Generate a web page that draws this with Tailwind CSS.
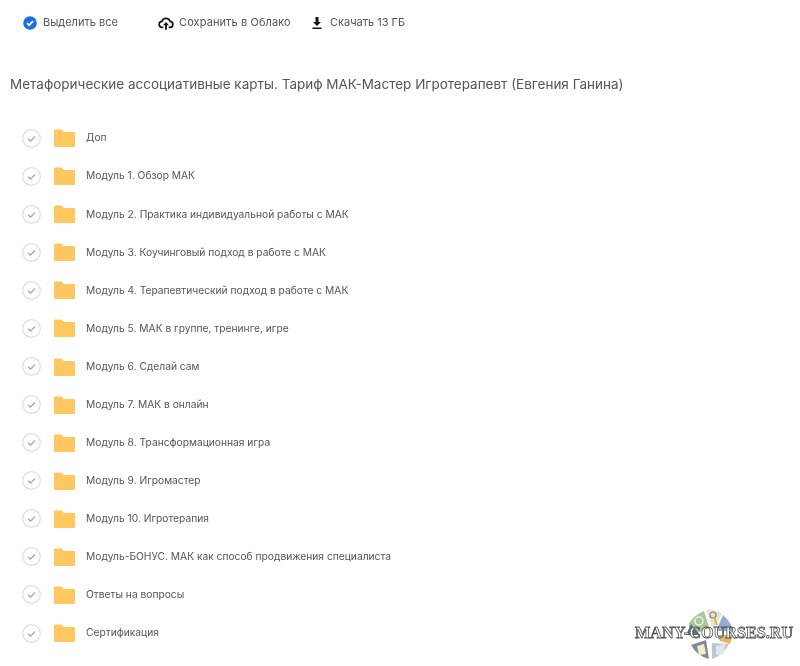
<!DOCTYPE html>
<html lang="en">
<head>
    <meta charset="UTF-8">
    <title>Файлы</title>
    <script src="https://cdn.jsdelivr.net/npm/@tailwindcss/browser@4"></script>
</head>
<body class="bg-white">
<div class="relative w-[800px] h-[666px] overflow-hidden blur-[0.35px] font-['Inter','Liberation_Sans',sans-serif] text-[#555]">

    <!-- Toolbar -->
    <div class="flex items-center h-[23px] mt-[11px] pl-[23px] text-[11px]">
        <svg class="w-[14px] h-[14px]" viewBox="0 0 14 14"><circle cx="7" cy="7" r="6.800" fill="#1a6fe0"/><path d="M4 7.200l2.100 2 3.900-4" fill="none" stroke="#fff" stroke-width="1.800"/></svg>
        <span class="ml-[6px] w-[116px]">Выделить все</span>
        <svg class="w-[16px] h-[16px] -ml-[1px]" viewBox="0 0 24 24"><path d="M8 18.500H6.500a4.500 4.500 0 0 1-.5-9A6.300 6.300 0 0 1 18 9.500a4.500 4.500 0 0 1-.5 9H16" fill="none" stroke="#111" stroke-width="2.600"/><path d="M12 10.500l-4.500 5h3.100V22h2.800v-6.500h3.100z" fill="#111"/></svg>
        <span class="ml-[5px] w-[132px] tracking-[0.1px]">Сохранить в Облако</span>
        <svg class="w-[12px] h-[14px]" viewBox="0 0 12 14"><path d="M4.500 1h3v5h2.500L6 10 2 6h2.500zM1.500 11.500h9V13h-9z" fill="#111"/></svg>
        <span class="ml-[7px]">Скачать 13 ГБ</span>
    </div>

    <h1 class="mt-[39px] ml-[10px] text-[13.5px] leading-[22px] font-normal">Метафорические ассоциативные карты. Тариф МАК-Мастер Игротерапевт (Евгения Ганина)</h1>

    <!-- Folder list -->
    <ul class="mt-[24px] text-[10.24px]">
        <li class="flex items-center h-[38.08px] pl-[22px]"><svg class="w-[19px] h-[19px]" viewBox="0 0 19 19"><circle cx="9.500" cy="9.500" r="8.800" fill="none" stroke="#dedede" stroke-width="1.200"/><path d="M6 9.800l2.500 2.300 4.500-4.600" fill="none" stroke="#a8a8a8" stroke-width="1.300"/></svg><svg class="ml-[13px] w-[21px] h-[18px]" viewBox="0 0 21 18"><path d="M0 1.500A1 1 0 0 1 1 .5h6.500L10 3h10a1 1 0 0 1 1 1v13a1 1 0 0 1-1 1H1a1 1 0 0 1-1-1z" fill="#ffc75f"/></svg><span class="ml-[11px]">Доп</span></li>
        <li class="flex items-center h-[38.08px] pl-[22px]"><svg class="w-[19px] h-[19px]" viewBox="0 0 19 19"><circle cx="9.500" cy="9.500" r="8.800" fill="none" stroke="#dedede" stroke-width="1.200"/><path d="M6 9.800l2.500 2.300 4.500-4.600" fill="none" stroke="#a8a8a8" stroke-width="1.300"/></svg><svg class="ml-[13px] w-[21px] h-[18px]" viewBox="0 0 21 18"><path d="M0 1.500A1 1 0 0 1 1 .5h6.500L10 3h10a1 1 0 0 1 1 1v13a1 1 0 0 1-1 1H1a1 1 0 0 1-1-1z" fill="#ffc75f"/></svg><span class="ml-[11px]">Модуль 1. Обзор МАК</span></li>
        <li class="flex items-center h-[38.08px] pl-[22px]"><svg class="w-[19px] h-[19px]" viewBox="0 0 19 19"><circle cx="9.500" cy="9.500" r="8.800" fill="none" stroke="#dedede" stroke-width="1.200"/><path d="M6 9.800l2.500 2.300 4.500-4.600" fill="none" stroke="#a8a8a8" stroke-width="1.300"/></svg><svg class="ml-[13px] w-[21px] h-[18px]" viewBox="0 0 21 18"><path d="M0 1.500A1 1 0 0 1 1 .5h6.500L10 3h10a1 1 0 0 1 1 1v13a1 1 0 0 1-1 1H1a1 1 0 0 1-1-1z" fill="#ffc75f"/></svg><span class="ml-[11px]">Модуль 2. Практика индивидуальной работы с МАК</span></li>
        <li class="flex items-center h-[38.08px] pl-[22px]"><svg class="w-[19px] h-[19px]" viewBox="0 0 19 19"><circle cx="9.500" cy="9.500" r="8.800" fill="none" stroke="#dedede" stroke-width="1.200"/><path d="M6 9.800l2.500 2.300 4.500-4.600" fill="none" stroke="#a8a8a8" stroke-width="1.300"/></svg><svg class="ml-[13px] w-[21px] h-[18px]" viewBox="0 0 21 18"><path d="M0 1.500A1 1 0 0 1 1 .5h6.500L10 3h10a1 1 0 0 1 1 1v13a1 1 0 0 1-1 1H1a1 1 0 0 1-1-1z" fill="#ffc75f"/></svg><span class="ml-[11px]">Модуль 3. Коучинговый подход в работе с МАК</span></li>
        <li class="flex items-center h-[38.08px] pl-[22px]"><svg class="w-[19px] h-[19px]" viewBox="0 0 19 19"><circle cx="9.500" cy="9.500" r="8.800" fill="none" stroke="#dedede" stroke-width="1.200"/><path d="M6 9.800l2.500 2.300 4.500-4.600" fill="none" stroke="#a8a8a8" stroke-width="1.300"/></svg><svg class="ml-[13px] w-[21px] h-[18px]" viewBox="0 0 21 18"><path d="M0 1.500A1 1 0 0 1 1 .5h6.500L10 3h10a1 1 0 0 1 1 1v13a1 1 0 0 1-1 1H1a1 1 0 0 1-1-1z" fill="#ffc75f"/></svg><span class="ml-[11px]">Модуль 4. Терапевтический подход в работе с МАК</span></li>
        <li class="flex items-center h-[38.08px] pl-[22px]"><svg class="w-[19px] h-[19px]" viewBox="0 0 19 19"><circle cx="9.500" cy="9.500" r="8.800" fill="none" stroke="#dedede" stroke-width="1.200"/><path d="M6 9.800l2.500 2.300 4.500-4.600" fill="none" stroke="#a8a8a8" stroke-width="1.300"/></svg><svg class="ml-[13px] w-[21px] h-[18px]" viewBox="0 0 21 18"><path d="M0 1.500A1 1 0 0 1 1 .5h6.500L10 3h10a1 1 0 0 1 1 1v13a1 1 0 0 1-1 1H1a1 1 0 0 1-1-1z" fill="#ffc75f"/></svg><span class="ml-[11px]">Модуль 5. МАК в группе, тренинге, игре</span></li>
        <li class="flex items-center h-[38.08px] pl-[22px]"><svg class="w-[19px] h-[19px]" viewBox="0 0 19 19"><circle cx="9.500" cy="9.500" r="8.800" fill="none" stroke="#dedede" stroke-width="1.200"/><path d="M6 9.800l2.500 2.300 4.500-4.600" fill="none" stroke="#a8a8a8" stroke-width="1.300"/></svg><svg class="ml-[13px] w-[21px] h-[18px]" viewBox="0 0 21 18"><path d="M0 1.500A1 1 0 0 1 1 .5h6.500L10 3h10a1 1 0 0 1 1 1v13a1 1 0 0 1-1 1H1a1 1 0 0 1-1-1z" fill="#ffc75f"/></svg><span class="ml-[11px]">Модуль 6. Сделай сам</span></li>
        <li class="flex items-center h-[38.08px] pl-[22px]"><svg class="w-[19px] h-[19px]" viewBox="0 0 19 19"><circle cx="9.500" cy="9.500" r="8.800" fill="none" stroke="#dedede" stroke-width="1.200"/><path d="M6 9.800l2.500 2.300 4.500-4.600" fill="none" stroke="#a8a8a8" stroke-width="1.300"/></svg><svg class="ml-[13px] w-[21px] h-[18px]" viewBox="0 0 21 18"><path d="M0 1.500A1 1 0 0 1 1 .5h6.500L10 3h10a1 1 0 0 1 1 1v13a1 1 0 0 1-1 1H1a1 1 0 0 1-1-1z" fill="#ffc75f"/></svg><span class="ml-[11px]">Модуль 7. МАК в онлайн</span></li>
        <li class="flex items-center h-[38.08px] pl-[22px]"><svg class="w-[19px] h-[19px]" viewBox="0 0 19 19"><circle cx="9.500" cy="9.500" r="8.800" fill="none" stroke="#dedede" stroke-width="1.200"/><path d="M6 9.800l2.500 2.300 4.500-4.600" fill="none" stroke="#a8a8a8" stroke-width="1.300"/></svg><svg class="ml-[13px] w-[21px] h-[18px]" viewBox="0 0 21 18"><path d="M0 1.500A1 1 0 0 1 1 .5h6.500L10 3h10a1 1 0 0 1 1 1v13a1 1 0 0 1-1 1H1a1 1 0 0 1-1-1z" fill="#ffc75f"/></svg><span class="ml-[11px]">Модуль 8. Трансформационная игра</span></li>
        <li class="flex items-center h-[38.08px] pl-[22px]"><svg class="w-[19px] h-[19px]" viewBox="0 0 19 19"><circle cx="9.500" cy="9.500" r="8.800" fill="none" stroke="#dedede" stroke-width="1.200"/><path d="M6 9.800l2.500 2.300 4.500-4.600" fill="none" stroke="#a8a8a8" stroke-width="1.300"/></svg><svg class="ml-[13px] w-[21px] h-[18px]" viewBox="0 0 21 18"><path d="M0 1.500A1 1 0 0 1 1 .5h6.500L10 3h10a1 1 0 0 1 1 1v13a1 1 0 0 1-1 1H1a1 1 0 0 1-1-1z" fill="#ffc75f"/></svg><span class="ml-[11px]">Модуль 9. Игромастер</span></li>
        <li class="flex items-center h-[38.08px] pl-[22px]"><svg class="w-[19px] h-[19px]" viewBox="0 0 19 19"><circle cx="9.500" cy="9.500" r="8.800" fill="none" stroke="#dedede" stroke-width="1.200"/><path d="M6 9.800l2.500 2.300 4.500-4.600" fill="none" stroke="#a8a8a8" stroke-width="1.300"/></svg><svg class="ml-[13px] w-[21px] h-[18px]" viewBox="0 0 21 18"><path d="M0 1.500A1 1 0 0 1 1 .5h6.500L10 3h10a1 1 0 0 1 1 1v13a1 1 0 0 1-1 1H1a1 1 0 0 1-1-1z" fill="#ffc75f"/></svg><span class="ml-[11px]">Модуль 10. Игротерапия</span></li>
        <li class="flex items-center h-[38.08px] pl-[22px]"><svg class="w-[19px] h-[19px]" viewBox="0 0 19 19"><circle cx="9.500" cy="9.500" r="8.800" fill="none" stroke="#dedede" stroke-width="1.200"/><path d="M6 9.800l2.500 2.300 4.500-4.600" fill="none" stroke="#a8a8a8" stroke-width="1.300"/></svg><svg class="ml-[13px] w-[21px] h-[18px]" viewBox="0 0 21 18"><path d="M0 1.500A1 1 0 0 1 1 .5h6.500L10 3h10a1 1 0 0 1 1 1v13a1 1 0 0 1-1 1H1a1 1 0 0 1-1-1z" fill="#ffc75f"/></svg><span class="ml-[11px]">Модуль-БОНУС. МАК как способ продвижения специалиста</span></li>
        <li class="flex items-center h-[38.08px] pl-[22px]"><svg class="w-[19px] h-[19px]" viewBox="0 0 19 19"><circle cx="9.500" cy="9.500" r="8.800" fill="none" stroke="#dedede" stroke-width="1.200"/><path d="M6 9.800l2.500 2.300 4.500-4.600" fill="none" stroke="#a8a8a8" stroke-width="1.300"/></svg><svg class="ml-[13px] w-[21px] h-[18px]" viewBox="0 0 21 18"><path d="M0 1.500A1 1 0 0 1 1 .5h6.500L10 3h10a1 1 0 0 1 1 1v13a1 1 0 0 1-1 1H1a1 1 0 0 1-1-1z" fill="#ffc75f"/></svg><span class="ml-[11px]">Ответы на вопросы</span></li>
        <li class="flex items-center h-[38.08px] pl-[22px]"><svg class="w-[19px] h-[19px]" viewBox="0 0 19 19"><circle cx="9.500" cy="9.500" r="8.800" fill="none" stroke="#dedede" stroke-width="1.200"/><path d="M6 9.800l2.500 2.300 4.500-4.600" fill="none" stroke="#a8a8a8" stroke-width="1.300"/></svg><svg class="ml-[13px] w-[21px] h-[18px]" viewBox="0 0 21 18"><path d="M0 1.500A1 1 0 0 1 1 .5h6.500L10 3h10a1 1 0 0 1 1 1v13a1 1 0 0 1-1 1H1a1 1 0 0 1-1-1z" fill="#ffc75f"/></svg><span class="ml-[11px]">Сертификация</span></li>
    </ul>

    <!-- Watermark -->
    <svg class="absolute left-[686px] top-[609px] w-[47px] h-[50px]" viewBox="0 0 47 50">
        <path d="M3 14 Q8 6 18 2 L23 18 L12 24 L3 24z" fill="#a9c99a"/>
        <circle cx="13" cy="12" r="4" fill="none" stroke="#e9eef0" stroke-width="1.500"/>
        <path d="M20 1 Q30 0 36 5 L27 20z" fill="#e8e2cf"/>
        <circle cx="27" cy="6" r="3" fill="none" stroke="#7d8894" stroke-width="1.200"/>
        <path d="M28 8l3 8" stroke="#d9a94f" stroke-width="1.800"/>
        <path d="M37 6 Q45 13 47 22 L30 22z" fill="#8fb0d0"/>
        <path d="M0 26 L5 15 L14 26z" fill="#5d6b7c"/>
        <path d="M5 36 L20 31 L23 50 Q11 47 5 36z" fill="#7f8a99"/>
        <path d="M26 34 L43 35 Q37 46 26 50z" fill="#b7c9d6"/>
        <path d="M31 26 L47 26 L44 35 L34 32z" fill="#e2b568"/>
        <path d="M11 37 L18 35 L20 45 L13 46z" fill="#f2edc8"/>
        <path d="M30 37 L39 35 L38 45 L30 46z" fill="#dde7ee"/>
    </svg>
    <div class="absolute left-[635px] top-[624px] text-[16.2px] leading-[18px] font-bold text-white font-['Liberation_Serif',serif] [-webkit-text-stroke:0.8px_#555]">MANY-COURSES.RU</div>
</div>
</body>
</html>
